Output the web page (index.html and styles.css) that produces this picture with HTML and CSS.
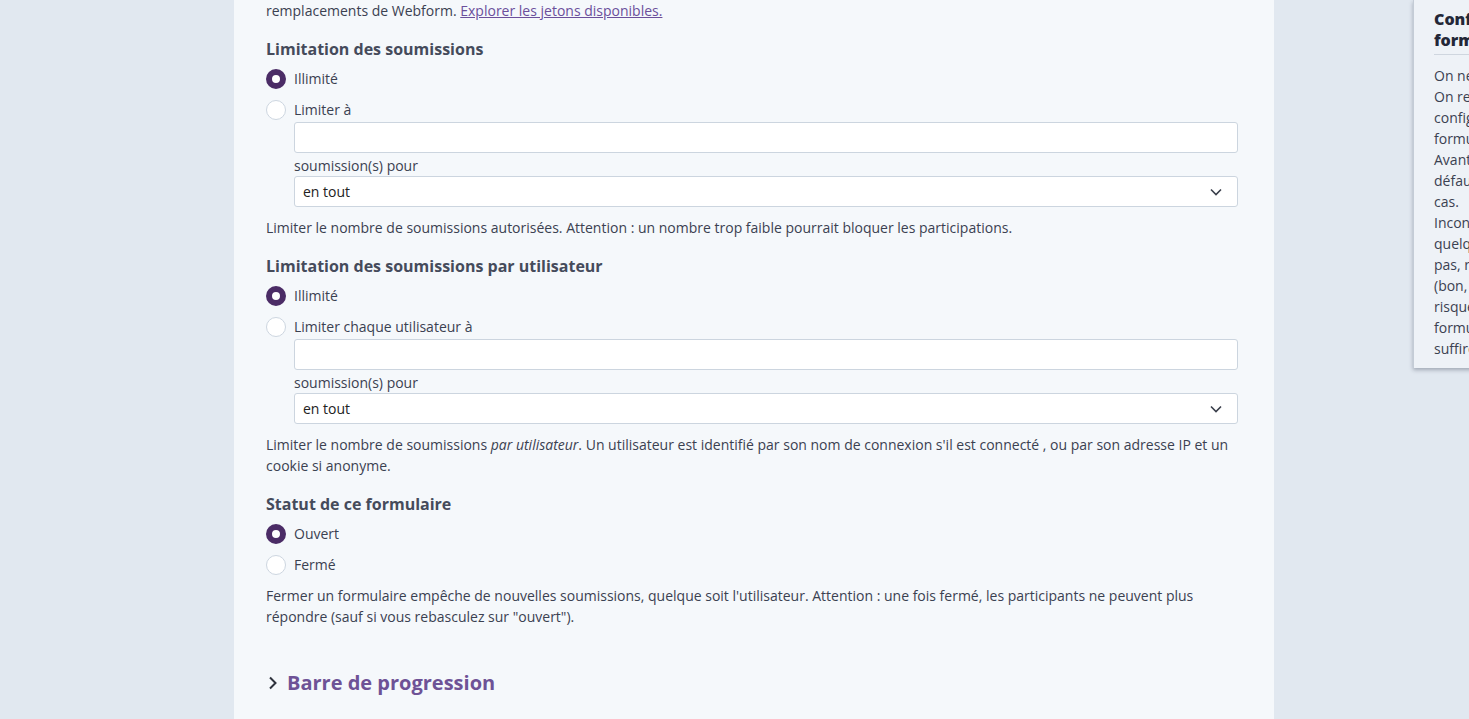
FILE: index.html
```html
<!DOCTYPE html>
<html lang="fr">
<head>
    <meta charset="UTF-8">
    <meta name="viewport" content="width=device-width, initial-scale=1.0">
    <title>Paramètres du formulaire</title>
    <link rel="stylesheet" href="styles.css">
</head>
<body>
    <div class="page">
        <main class="panel">
            <p class="intro">remplacements de Webform. <a href="#">Explorer les jetons disponibles.</a></p>

            <fieldset class="section">
                <legend class="section-title">Limitation des soumissions</legend>
                <label class="radio"><input type="radio" name="total" checked><span class="dot"></span>Illimité</label>
                <label class="radio"><input type="radio" name="total"><span class="dot"></span>Limiter à</label>
                <div class="sub">
                    <input type="text" class="text-input">
                    <label class="sub-label">soumission(s) pour</label>
                    <div class="select">en tout
                        <svg width="12" height="8" viewBox="0 0 12 8"><path d="M1 1.5l5 5 5-5" fill="none" stroke="#3a3f4b" stroke-width="1.6"/></svg>
                    </div>
                </div>
                <p class="help">Limiter le nombre de soumissions autorisées. Attention : un nombre trop faible pourrait bloquer les participations.</p>
            </fieldset>

            <fieldset class="section">
                <legend class="section-title">Limitation des soumissions par utilisateur</legend>
                <label class="radio"><input type="radio" name="user" checked><span class="dot"></span>Illimité</label>
                <label class="radio"><input type="radio" name="user"><span class="dot"></span>Limiter chaque utilisateur à</label>
                <div class="sub">
                    <input type="text" class="text-input">
                    <label class="sub-label">soumission(s) pour</label>
                    <div class="select">en tout
                        <svg width="12" height="8" viewBox="0 0 12 8"><path d="M1 1.5l5 5 5-5" fill="none" stroke="#3a3f4b" stroke-width="1.6"/></svg>
                    </div>
                </div>
                <p class="help">Limiter le nombre de soumissions <em>par utilisateur</em>. Un utilisateur est identifié par son nom de connexion s'il est connecté , ou par son adresse IP et un cookie si anonyme.</p>
            </fieldset>

            <fieldset class="section">
                <legend class="section-title">Statut de ce formulaire</legend>
                <label class="radio"><input type="radio" name="status" checked><span class="dot"></span>Ouvert</label>
                <label class="radio"><input type="radio" name="status"><span class="dot"></span>Fermé</label>
                <p class="help help-status">Fermer un formulaire empêche de nouvelles soumissions, quelque soit l'utilisateur. Attention : une fois fermé, les participants ne peuvent plus répondre (sauf si vous rebasculez sur "ouvert").</p>
            </fieldset>

            <div class="details">
                <svg width="10" height="14" viewBox="0 0 10 14"><path d="M2 1.5l5.5 5.5-5.5 5.5" fill="none" stroke="#2f333d" stroke-width="2"/></svg>
                <span>Barre de progression</span>
            </div>
        </main>

        <aside class="sidebar">
            <h2>Configuration du formulaire</h2>
            <p>On ne peut pas tout prévoir.<br>
            On retrouve ici les options de<br>
            configuration de ce<br>
            formulaire.<br>
            Avant de modifier, les valeurs<br>
            défaut conviennent dans la<br>
            cas.<br>
            Inconvénient : si vous<br>
            quelque chose que vous ne<br>
            pas, rien ne garantit le<br>
            (bon, pas grand chose) et<br>
            risquez de bloquer votre<br>
            formulaire. Les valeurs par<br>
            suffiront.</p>
        </aside>
    </div>
</body>
</html>
```

FILE: styles.css
```css
/* General reset */
* {
    margin: 0;
    padding: 0;
    box-sizing: border-box;
}

body {
    font-family: 'Open Sans', 'Liberation Sans', sans-serif;
    font-size: 14px;
    line-height: 21px;
    color: #3b4151;
    background-color: #e1e8f0;
    overflow: hidden;
}

.page {
    display: flex;
    align-items: flex-start;
    gap: 139px;
    padding-left: 234px;
    width: 1800px;
}

.panel {
    width: 1040px;
    flex-shrink: 0;
    min-height: 760px;
    background: #f5f8fb;
    padding: 0 36px 0 32px;
}

.intro a {
    color: #6b4f9b;
}

.section {
    border: none;
    margin-top: 17px;
}

.section-title {
    display: block;
    float: left;
    width: 100%;
    font-size: 16px;
    line-height: 22px;
    font-weight: 700;
    color: #454b5b;
    margin-bottom: 8px;
}

.radio {
    clear: both;
    display: flex;
    align-items: center;
    gap: 8px;
    height: 21px;
    margin-bottom: 10px;
    cursor: pointer;
}

.radio input {
    display: none;
}

.dot {
    width: 20px;
    height: 20px;
    border-radius: 50%;
    border: 1px solid #cdd6e0;
    background: #fff;
    flex-shrink: 0;
}

.radio input:checked + .dot {
    border: 6px solid #4b2c66;
}

.sub {
    margin: -8px 0 0 28px;
}

.text-input,
.select {
    display: block;
    width: 100%;
    height: 31px;
    border: 1px solid #ccd5df;
    border-radius: 3px;
    background: #fff;
    font-family: inherit;
    font-size: 14px;
}

.sub-label {
    display: block;
    line-height: 20px;
    margin-top: 3px;
}

.select {
    display: flex;
    align-items: center;
    justify-content: space-between;
    padding: 0 15px 0 8px;
    color: #222;
}

.help {
    margin-top: 10px;
}

.help-status {
    margin-top: 2px;
}

.details {
    display: flex;
    align-items: center;
    gap: 9px;
    margin: 42px 0 0 2px;
    font-size: 20px;
    line-height: 28px;
    font-weight: 700;
    color: #6e5296;
}

.sidebar {
    width: 270px;
    flex-shrink: 0;
    background: #eef2f7;
    border-left: 1px solid #c4ccd6;
    box-shadow: 0 2px 4px rgba(40, 50, 70, 0.35);
    padding: 9px 20px 9px 20px;
}

.sidebar h2 {
    font-size: 16px;
    line-height: 21px;
    font-weight: 800;
    color: #232738;
    padding-bottom: 3px;
    border-bottom: 1px solid #cfd6df;
    margin-bottom: 10px;
}

.sidebar p {
    color: #3b4151;
}
```
